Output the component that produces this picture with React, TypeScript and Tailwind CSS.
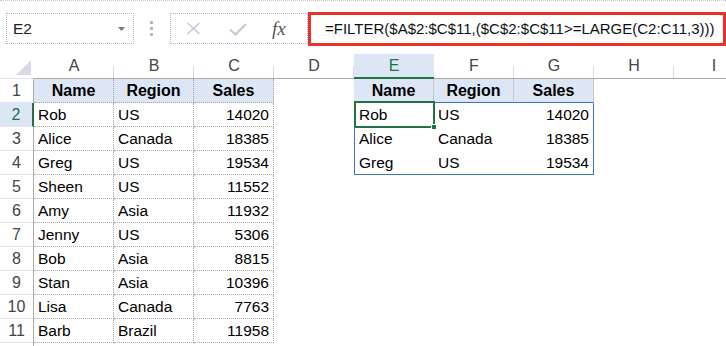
import React from "react";

const cols = ["A", "B", "C", "D", "E", "F", "G", "H", "I"];

const source: (string | number)[][] = [
  ["Name", "Region", "Sales"],
  ["Rob", "US", 14020],
  ["Alice", "Canada", 18385],
  ["Greg", "US", 19534],
  ["Sheen", "US", 11552],
  ["Amy", "Asia", 11932],
  ["Jenny", "US", 5306],
  ["Bob", "Asia", 8815],
  ["Stan", "Asia", 10396],
  ["Lisa", "Canada", 7763],
  ["Barb", "Brazil", 11958],
];

// spilled result of the FILTER formula, lands in E1:G4
const result: (string | number)[][] = [
  ["Name", "Region", "Sales"],
  ["Rob", "US", 14020],
  ["Alice", "Canada", 18385],
  ["Greg", "US", 19534],
];

function cellValue(r: number, c: number): string | number | undefined {
  if (c <= 2) return source[r - 1]?.[c];
  if (c >= 4 && c <= 6) return result[r - 1]?.[c - 4];
  return undefined;
}

function cellClass(r: number, c: number, value: string | number | undefined) {
  let cls = "relative h-full w-[80px] shrink-0 px-[4px] flex items-center whitespace-nowrap";
  if (r === 1 && value !== undefined) cls += " justify-center font-bold text-[16px] bg-[#dce6f4]";
  else if (typeof value === "number") cls += " justify-end";

  if (c <= 2 && r <= 11) cls += " border-r border-b border-dotted border-[#a3a3a3]";
  if (c >= 4 && c <= 6 && r === 1) cls += " border-r border-b border-r-[#c6c6c6] border-b-[#3a74c9]";
  if (c >= 4 && c <= 6 && r >= 2 && r <= 4) {
    if (c === 4) cls += " border-l border-l-[#3a74c9]";
    if (c === 6) cls += " border-r border-r-[#3a74c9]";
    if (r === 4) cls += " border-b border-b-[#3a74c9]";
  }
  return cls;
}

function Toolbar() {
  return (
    <div className="flex h-[54px] items-start border-t border-dotted border-[#c4c4c4]">
      <div className="ml-[6px] mt-[12px] flex h-[31px] w-[128px] items-center justify-between border border-dotted border-[#b3b3d1] pl-[6px] pr-[8px] text-[15.5px] text-[#222]">
        <span>E2</span>
        <svg width="7" height="4" viewBox="0 0 7 4">
          <path d="M0 0 L7 0 L3.5 4 Z" fill="#777" />
        </svg>
      </div>
      <div className="ml-[16px] mt-[20px] flex flex-col gap-[3px]">
        <div className="h-[3px] w-[3px] bg-[#b8b8b8]" />
        <div className="h-[3px] w-[3px] bg-[#b8b8b8]" />
        <div className="h-[3px] w-[3px] bg-[#b8b8b8]" />
      </div>
      <div className="ml-[17px] mt-[12px] flex h-[31px] w-[138px] items-center border border-dotted border-[#b3b3d1]">
        <svg className="ml-[15px]" width="15" height="13" viewBox="0 0 15 13">
          <path d="M1.5 1 L13.5 12 M13.5 1 L1.5 12" stroke="#c6c6de" strokeWidth="1.6" />
        </svg>
        <svg className="ml-[28px]" width="18" height="14" viewBox="0 0 18 14">
          <path d="M1 7.5 L6.5 12.5 L17 2" stroke="#c6c6de" strokeWidth="2.2" fill="none" />
        </svg>
        <span className="ml-[25px] font-['Liberation_Serif',serif] text-[19px] italic leading-none text-[#555]">
          fx
        </span>
      </div>
      <div className="mt-[11px] flex h-[34px] w-[418px] items-center whitespace-nowrap border-[3px] border-[#e8322b] pl-[14px] text-[15px] text-[#111]">
        =FILTER($A$2:$C$11,($C$2:$C$11&gt;=LARGE(C2:C11,3)))
      </div>
    </div>
  );
}

function ColumnHeader() {
  return (
    <div className="flex h-[25px]">
      <div className="flex h-full w-[34px] shrink-0 items-end justify-end border-b border-[#e2e2ee] pb-[3px] pr-[3px]">
        <svg width="15" height="15" viewBox="0 0 15 15">
          <path d="M15 0 L15 15 L0 15 Z" fill="#d9d9e8" />
        </svg>
      </div>
      {cols.map((col) =>
        col === "E" ? (
          <div
            key={col}
            className="flex h-full w-[80px] shrink-0 items-center justify-center border-b-2 border-[#217346] bg-[#dce6f4] text-[16px] text-[#217346]"
          >
            {col}
          </div>
        ) : (
          <div
            key={col}
            className="flex h-full w-[80px] shrink-0 items-center justify-center border-b border-[#ababab] bg-[linear-gradient(#d6d6ea,#d6d6ea)] bg-[length:1px_12px] bg-[position:right_bottom] bg-no-repeat text-[16px] text-[#444]"
          >
            {col}
          </div>
        )
      )}
    </div>
  );
}

function Row({ r }: { r: number }) {
  return (
    <div className="flex h-[24px]">
      {r === 2 ? (
        <div className="flex h-full w-[34px] shrink-0 items-center justify-center border-b border-r-2 border-b-[#e4e4f0] border-r-[#217346] bg-[#dce6f4] text-[16px] text-[#217346]">
          {r}
        </div>
      ) : (
        <div className="flex h-full w-[34px] shrink-0 items-center justify-center border-b border-r border-b-[#e4e4f0] border-r-[#ababab] text-[16px] text-[#444]">
          {r <= 11 ? r : ""}
        </div>
      )}
      {cols.map((col, c) => {
        const value = cellValue(r, c);
        return (
          <div key={col} className={cellClass(r, c, value)}>
            {value}
            {r === 2 && c === 4 && (
              <div className="absolute -bottom-[1px] -left-[1px] -right-[1px] -top-[2px] border-2 border-[#217346]">
                <div className="absolute -bottom-[4px] -right-[4px] h-[6px] w-[6px] border border-white bg-[#217346]" />
              </div>
            )}
          </div>
        );
      })}
    </div>
  );
}

export default function App() {
  const rows = Array.from({ length: 12 }, (_, i) => i + 1);
  return (
    <div className="h-[346px] w-[726px] overflow-hidden bg-white font-['Liberation_Sans',Arial,sans-serif] text-[15.5px] text-black">
      <Toolbar />
      <ColumnHeader />
      {rows.map((r) => (
        <Row key={r} r={r} />
      ))}
    </div>
  );
}
